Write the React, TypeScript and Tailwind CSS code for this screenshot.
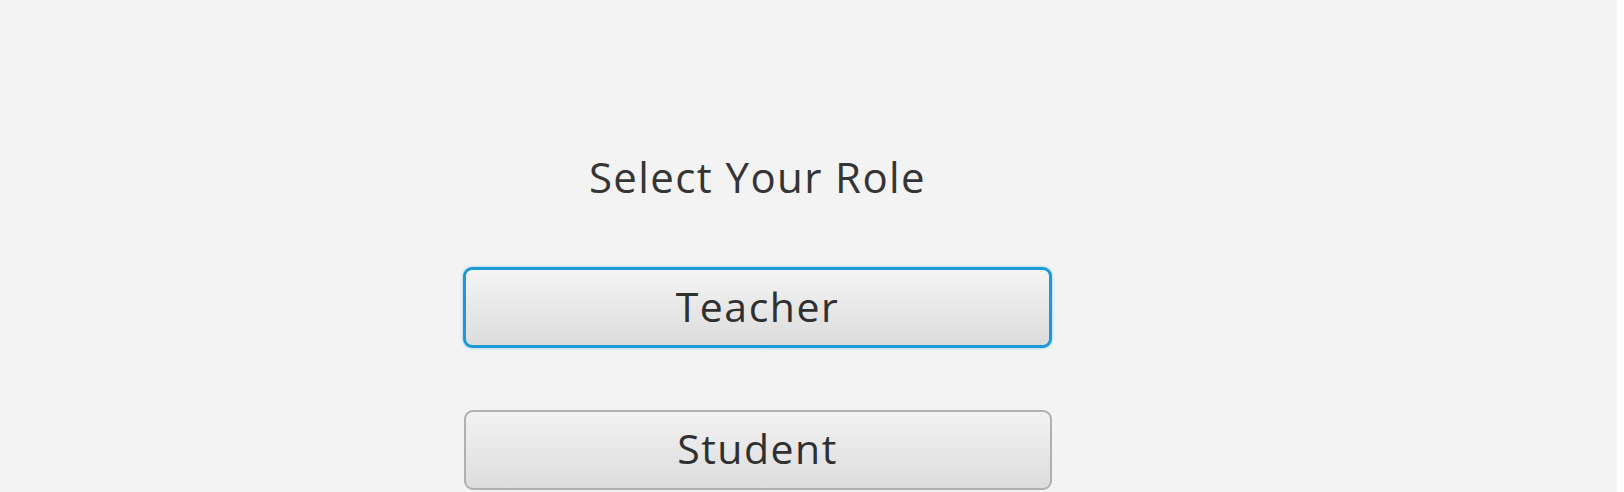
import React from 'react';

function RoleButton({ label, focused }: { label: string; focused?: boolean }) {
  return (
    <button
      type="button"
      className={
        focused
          ? 'flex h-[81px] w-[589px] items-center justify-center rounded-[9px] border-[3px] border-[#1c9ad6] bg-gradient-to-b from-[#f4f4f4] to-[#dcdcdc] pb-[2px] text-[41px] tracking-[1.5px] text-[#303030] shadow-[0_0_3px_#7cc8ec]'
          : 'flex h-[80px] w-[588px] items-center justify-center rounded-[9px] border-2 border-[#b0b0b0] bg-gradient-to-b from-[#f2f2f2] to-[#dddddd] pb-[2px] text-[41px] tracking-[1.5px] text-[#303030]'
      }
    >
      {label}
    </button>
  );
}

export default function App() {
  return (
    <div className="flex h-[492px] w-[1624px] bg-white font-['Open_Sans','Noto_Sans',sans-serif]">
      <main className="flex h-full w-[1616px] flex-col bg-[#f3f3f3] pl-[463px] pt-[156px]">
        <div className="flex w-[589px] flex-col items-center">
          <h1 className="text-[42px] leading-none tracking-[1.4px] text-[#353535]">Select Your Role</h1>

          <div className="mt-[69px]">
            <RoleButton label="Teacher" focused />
          </div>

          <div className="mt-[62px]">
            <RoleButton label="Student" />
          </div>
        </div>
      </main>
      <div className="h-full w-[8px] border-l border-[#f6f6f6] bg-white" />
    </div>
  );
}
